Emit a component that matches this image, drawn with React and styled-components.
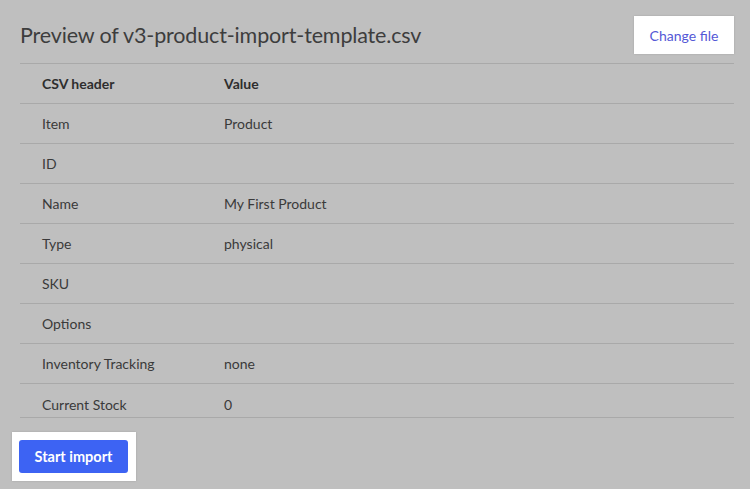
import React from "react";
import styled, { createGlobalStyle } from "styled-components";

const Global = createGlobalStyle`
  html, body { margin: 0; padding: 0; background: #bfbfbf; }
  body { font-family: "Lato", "Liberation Sans", sans-serif; }
  * { box-sizing: border-box; }
`;

const Page = styled.div`
  width: 750px;
  height: 489px;
  padding: 16px 16px 0 20px;
  background: #bfbfbf;
  overflow: hidden;
`;

const Header = styled.div`
  display: flex;
  justify-content: space-between;
  align-items: center;
  height: 38px;
  margin-bottom: 9px;
`;

const Title = styled.h1`
  margin: 0;
  font-size: 21.5px;
  font-weight: 400;
  color: #3d3d3d;
  letter-spacing: -0.15px;
`;

const Spotlight = styled.div`
  background: #ffffff;
  padding: ${(p) => p.$pad || "0"};
  display: inline-flex;
  box-shadow: 0 0 2px rgba(0, 0, 0, 0.15);
  margin-left: ${(p) => p.$ml || "0"};
`;

const LinkButton = styled.button`
  width: 100px;
  height: 38px;
  border: none;
  background: transparent;
  font-family: inherit;
  font-size: 14px;
  color: #5458d6;
  cursor: pointer;
`;

const TableWrap = styled.div`
  width: 714px;
  height: 355px;
  overflow: hidden;
  border-top: 1px solid #a9a9a9;
  border-bottom: 1px solid #a9a9a9;
`;

const Row = styled.div`
  display: grid;
  grid-template-columns: 182px 1fr;
  align-items: center;
  height: 40px;
  padding-left: 22px;
  border-bottom: 1px solid #a9a9a9;
  font-size: 14px;
  color: ${(p) => (p.$head ? "#2e2e2e" : "#3a3a3a")};
  font-weight: ${(p) => (p.$head ? 700 : 400)};
  &:last-child { border-bottom: none; }
`;

const Footer = styled.div`
  padding-top: 14px;
`;

const PrimaryButton = styled.button`
  width: 109px;
  height: 33px;
  border: none;
  border-radius: 3px;
  background: #3d63f3;
  color: #ffffff;
  font-family: inherit;
  font-size: 14.5px;
  font-weight: 700;
  cursor: pointer;
`;

const rows = [
  ["Item", "Product"],
  ["ID", ""],
  ["Name", "My First Product"],
  ["Type", "physical"],
  ["SKU", ""],
  ["Options", ""],
  ["Inventory Tracking", "none"],
  ["Current Stock", "0"],
];

export default function App() {
  return (
    <>
      <Global />
      <Page>
        <Header>
          <Title>Preview of v3-product-import-template.csv</Title>
          <Spotlight>
            <LinkButton>Change file</LinkButton>
          </Spotlight>
        </Header>
        <TableWrap>
          <Row $head>
            <span>CSV header</span>
            <span>Value</span>
          </Row>
          {rows.map(([k, v]) => (
            <Row key={k}>
              <span>{k}</span>
              <span>{v}</span>
            </Row>
          ))}
        </TableWrap>
        <Footer>
          <Spotlight $pad="8px 8px 8px 7px" $ml="-8px">
            <PrimaryButton>Start import</PrimaryButton>
          </Spotlight>
        </Footer>
      </Page>
    </>
  );
}
